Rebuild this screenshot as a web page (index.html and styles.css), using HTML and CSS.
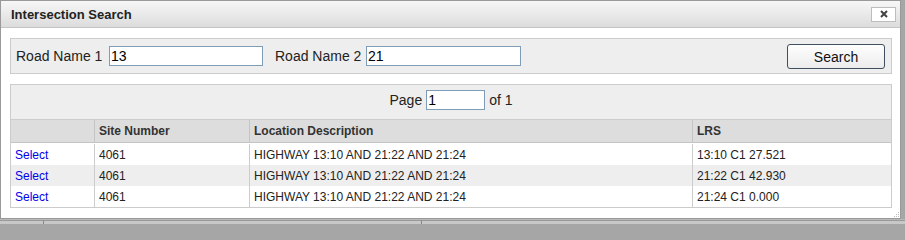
FILE: index.html
```html
<!DOCTYPE html>
<html>
<head>
<meta charset="utf-8">
<title>Intersection Search</title>
<link rel="stylesheet" href="styles.css">
</head>
<body>
<div class="dialog">
  <div class="titlebar">
    <span class="title">Intersection Search</span>
    <button class="close" type="button" aria-label="Close">
      <svg width="8" height="8" viewBox="0 0 8 8"><path d="M1 1L7 7M7 1L1 7" stroke="#444" stroke-width="2" fill="none"/></svg>
    </button>
  </div>
  <div class="content">
    <div class="search-panel">
      <label class="lbl lbl1">Road Name 1</label>
      <input class="field field1" type="text" value="13">
      <label class="lbl lbl2">Road Name 2</label>
      <input class="field field2" type="text" value="21">
      <button class="search-btn" type="button">Search</button>
    </div>
    <div class="grid">
      <div class="pager">
        <span>Page</span>
        <input class="page-input" type="text" value="1">
        <span>of 1</span>
      </div>
      <div class="row head">
        <div class="cell"></div>
        <div class="cell">Site Number</div>
        <div class="cell">Location Description</div>
        <div class="cell">LRS</div>
      </div>
      <div class="gap"></div>
      <div class="row">
        <div class="cell"><a href="#">Select</a></div>
        <div class="cell">4061</div>
        <div class="cell">HIGHWAY 13:10 AND 21:22 AND 21:24</div>
        <div class="cell">13:10 C1 27.521</div>
      </div>
      <div class="row alt">
        <div class="cell"><a href="#">Select</a></div>
        <div class="cell">4061</div>
        <div class="cell">HIGHWAY 13:10 AND 21:22 AND 21:24</div>
        <div class="cell">21:22 C1 42.930</div>
      </div>
      <div class="row">
        <div class="cell"><a href="#">Select</a></div>
        <div class="cell">4061</div>
        <div class="cell">HIGHWAY 13:10 AND 21:22 AND 21:24</div>
        <div class="cell">21:24 C1 0.000</div>
      </div>
    </div>
    <svg class="grip" width="7" height="7" viewBox="0 0 7 7">
      <rect x="5" y="1" width="1" height="1" fill="#bbb"/>
      <rect x="3" y="3" width="1" height="1" fill="#bbb"/>
      <rect x="5" y="3" width="1" height="1" fill="#bbb"/>
      <rect x="1" y="5" width="1" height="1" fill="#bbb"/>
      <rect x="3" y="5" width="1" height="1" fill="#bbb"/>
      <rect x="5" y="5" width="1" height="1" fill="#bbb"/>
    </svg>
  </div>
</div>
<div class="under">
  <div class="ucell u1"></div>
  <div class="ucell u2"></div>
  <div class="ucell u3"></div>
</div>
</body>
</html>
```
FILE: styles.css
```css
html, body {
  margin: 0;
  padding: 0;
}
body {
  background: #a6a6a6;
  font-family: "Liberation Sans", Arial, sans-serif;
  color: #222;
  width: 905px;
  height: 224px;
  overflow: hidden;
}
.dialog {
  box-sizing: border-box;
  width: 901px;
  height: 219px;
  border: 1px solid #999;
  background: #fff;
  position: relative;
}
.titlebar {
  box-sizing: border-box;
  height: 27px;
  border-bottom: 1px solid #c4c4c4;
  background: linear-gradient(#f7f7f7, #dcdcdc);
  display: flex;
  align-items: center;
  justify-content: space-between;
  padding: 0 4px 0 10px;
}
.title {
  font-weight: bold;
  font-size: 13px;
  color: #222;
  margin-top: 1px;
}
.close {
  box-sizing: border-box;
  width: 25px;
  height: 15px;
  margin-top: 0px;
  border: 1px solid #bdbdbd;
  background: #fff;
  padding: 0;
  display: flex;
  align-items: center;
  justify-content: center;
}
.close svg {
  display: block;
}
.content {
  padding: 10px 8px 0 9px;
}
.search-panel {
  box-sizing: border-box;
  height: 36px;
  border: 1px solid #ccc;
  background: #eee;
  display: flex;
  align-items: center;
  padding-left: 5px;
  font-size: 14px;
}
.lbl {
  color: #222;
  white-space: nowrap;
}
.lbl1 {
  width: 93px;
}
.lbl2 {
  width: 91px;
  margin-left: 12px;
}
.field {
  box-sizing: border-box;
  height: 20px;
  border: 1px solid #7f9db9;
  background: #fff;
  font-family: "Liberation Sans", Arial, sans-serif;
  font-size: 14px;
  color: #000;
  padding: 0 1px;
  margin: 0;
  outline: none;
}
.field1 {
  width: 154px;
}
.field2 {
  width: 155px;
}
.search-btn {
  box-sizing: border-box;
  margin-left: auto;
  margin-right: 6px;
  width: 98px;
  height: 25px;
  border: 1px solid #3f4f60;
  border-radius: 3px;
  background: linear-gradient(#fefefe, #ececec);
  font-family: "Liberation Sans", Arial, sans-serif;
  font-size: 14px;
  color: #111;
  padding: 0;
  margin-top: 1px;
}
.grid {
  box-sizing: border-box;
  width: 882px;
  margin-top: 10px;
  border: 1px solid #ccc;
}
.pager {
  box-sizing: border-box;
  height: 35px;
  background: #eee;
  border-bottom: 1px solid #ccc;
  display: flex;
  align-items: center;
  justify-content: center;
  padding-bottom: 4px;
  font-size: 14px;
  color: #222;
  gap: 4px;
}
.page-input {
  box-sizing: border-box;
  width: 59px;
  height: 20px;
  border: 1px solid #7f9db9;
  background: #fff;
  font-family: "Liberation Sans", Arial, sans-serif;
  font-size: 14px;
  color: #000;
  padding: 0 1px;
  margin: 0;
  outline: none;
}
.row {
  display: grid;
  grid-template-columns: 84px 155px 443px 1fr;
  height: 21px;
  font-size: 12px;
}
.row.head {
  box-sizing: border-box;
  height: 23px;
  background: #ddd;
  border-bottom: 1px solid #c4c4c4;
  font-weight: bold;
  color: #333;
}
.row.alt {
  background: #eee;
}
.gap {
  height: 1px;
  background: #fff;
}
.cell {
  box-sizing: border-box;
  border-right: 1px solid #ccc;
  padding-left: 4px;
  display: flex;
  align-items: center;
  white-space: nowrap;
  overflow: hidden;
}
.cell:last-child {
  border-right: none;
}
.row.head .cell {
  border-right-color: #c4c4c4;
}
.cell a {
  color: #0000ee;
  text-decoration: none;
}
.grip {
  position: absolute;
  right: 0;
  bottom: 0;
  display: block;
}
.under {
  box-sizing: border-box;
  height: 5px;
  width: 905px;
  background: #c8c8c8;
  border-top: 1px solid #b9b9b9;
  display: flex;
}
.ucell {
  box-sizing: border-box;
  height: 4px;
  border-top: 1px solid #999;
}
.u1 {
  width: 44px;
  border-right: 1px solid #888;
}
.u2 {
  width: 378px;
  border-right: 1px solid #888;
}
.u3 {
  flex: 1;
}
```
